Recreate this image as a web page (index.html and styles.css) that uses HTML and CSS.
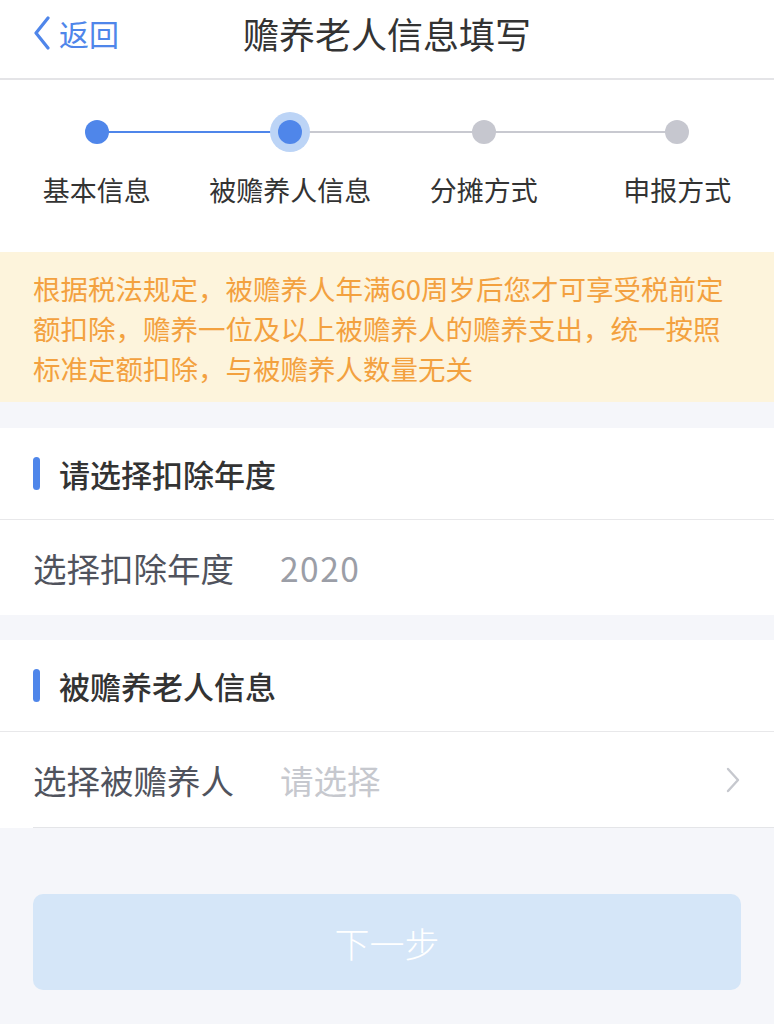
FILE: index.html
```html
<!DOCTYPE html>
<html lang="zh-CN">
<head>
<meta charset="utf-8">
<title>赡养老人信息填写</title>
<link rel="stylesheet" href="styles.css">
</head>
<body>
<div class="page">
  <header class="nav">
    <a class="back">
      <svg class="back-icon" width="18" height="34" viewBox="0 0 18 34"><path d="M15 2 L3 17 L15 32" fill="none" stroke="#4f86ea" stroke-width="3.2" stroke-linecap="round" stroke-linejoin="round"/></svg>
      <span>返回</span>
    </a>
    <h1 class="nav-title">赡养老人信息填写</h1>
    <span class="nav-side"></span>
  </header>

  <section class="steps">
    <div class="step done">
      <div class="dot-wrap"><span class="dot"></span></div>
      <div class="step-label">基本信息</div>
    </div>
    <div class="step active">
      <div class="dot-wrap"><span class="dot"></span></div>
      <div class="step-label">被赡养人信息</div>
    </div>
    <div class="step">
      <div class="dot-wrap"><span class="dot"></span></div>
      <div class="step-label">分摊方式</div>
    </div>
    <div class="step last">
      <div class="dot-wrap"><span class="dot"></span></div>
      <div class="step-label">申报方式</div>
    </div>
  </section>

  <div class="notice">根据税法规定，被赡养人年满60周岁后您才可享受税前定<br>额扣除，赡养一位及以上被赡养人的赡养支出，统一按照<br>标准定额扣除，与被赡养人数量无关</div>

  <section class="card">
    <div class="card-head"><span class="bar"></span><span class="card-title">请选择扣除年度</span></div>
    <div class="row">
      <span class="row-label">选择扣除年度</span>
      <span class="row-value digits">2020</span>
    </div>
  </section>

  <section class="card card-second">
    <div class="card-head"><span class="bar"></span><span class="card-title">被赡养老人信息</span></div>
    <div class="row row-inset">
      <span class="row-label">选择被赡养人</span>
      <span class="row-value placeholder">请选择</span>
      <svg class="chev" width="14" height="26" viewBox="0 0 14 26"><path d="M2 2 L12 13 L2 24" fill="none" stroke="#c6c8ce" stroke-width="2.4" stroke-linecap="round" stroke-linejoin="round"/></svg>
    </div>
  </section>

  <div class="actions">
    <button class="next-btn">下一步</button>
  </div>
</div>
</body>
</html>
```

FILE: styles.css
```css
* { box-sizing: border-box; }
html, body { margin: 0; padding: 0; }
body {
  background: #f5f6fa;
  font-family: "Noto Sans CJK SC", "Noto Sans", sans-serif;
  color: #333;
}
.page { width: 774px; min-height: 1024px; background: #f5f6fa; }

.nav {
  height: 80px;
  background: #fff;
  border-bottom: 2px solid #e4e4e7;
  display: grid;
  grid-template-columns: 1fr auto 1fr;
  align-items: center;
  padding: 0 33px 12px;
}
.back {
  display: flex;
  align-items: center;
  gap: 8px;
  color: #4f86ea;
  font-size: 30px;
  line-height: 40px;
}
.back-icon { display: block; }
.nav-title {
  margin: 0;
  font-size: 36px;
  font-weight: 400;
  color: #333;
  line-height: 44px;
}

.steps {
  background: #fff;
  display: grid;
  grid-template-columns: repeat(4, 1fr);
  padding: 32px 0 44px;
}
.step {
  display: flex;
  flex-direction: column;
  align-items: center;
  position: relative;
}
.dot-wrap {
  width: 100%;
  height: 40px;
  display: flex;
  align-items: center;
  justify-content: center;
  position: relative;
}
.dot-wrap::after {
  content: "";
  position: absolute;
  left: 50%;
  top: 19px;
  width: 100%;
  height: 2px;
  background: #c8c9d0;
}
.step.done .dot-wrap::after { background: #4f86ea; }
.step.last .dot-wrap::after { display: none; }
.dot {
  width: 24px;
  height: 24px;
  border-radius: 50%;
  background: #c6c7cf;
  position: relative;
  z-index: 1;
}
.step.done .dot, .step.active .dot { background: #4f86ea; }
.step.active .dot { box-shadow: 0 0 0 8px #bcd4f6; }
.step-label {
  margin-top: 20px;
  font-size: 27px;
  line-height: 36px;
  color: #333;
}

.notice {
  background: #fdf4dc;
  color: #f3a13f;
  font-size: 27.5px;
  line-height: 40px;
  padding: 16px 33px 14px;
  white-space: nowrap;
}

.card {
  background: #fff;
  margin-top: 26px;
}
.card-second { margin-top: 25px; }
.card-head {
  height: 92px;
  border-bottom: 1px solid #e8e8ea;
  display: flex;
  align-items: center;
  padding: 0 33px;
  gap: 19px;
}
.bar {
  width: 7px;
  height: 33px;
  border-radius: 4px;
  background: #4f86ea;
}
.card-title {
  font-size: 31px;
  font-weight: 500;
  color: #333;
}
.row {
  height: 95px;
  display: flex;
  align-items: center;
  padding: 0 34px 0 33px;
}
.row-inset {
  margin-left: 33px;
  padding-left: 0;
  height: 96px;
  border-bottom: 1px solid #e4e5e8;
}
.row-label {
  width: 247px;
  font-size: 33.5px;
  color: #50535d;
}
.row-value {
  flex: 1;
  font-size: 33.5px;
  color: #9b9ea7;
}
.row-value.digits { letter-spacing: 1.5px; }
.row-value.placeholder { color: #c6c8ce; }
.chev { display: block; }

.actions { padding: 66px 33px 0; }
.next-btn {
  display: block;
  width: 100%;
  height: 96px;
  border: 0;
  border-radius: 10px;
  background: #d5e6f8;
  color: #fff;
  font-family: "Noto Sans CJK SC", sans-serif;
  font-size: 35px;
  font-weight: 300;
}
```
